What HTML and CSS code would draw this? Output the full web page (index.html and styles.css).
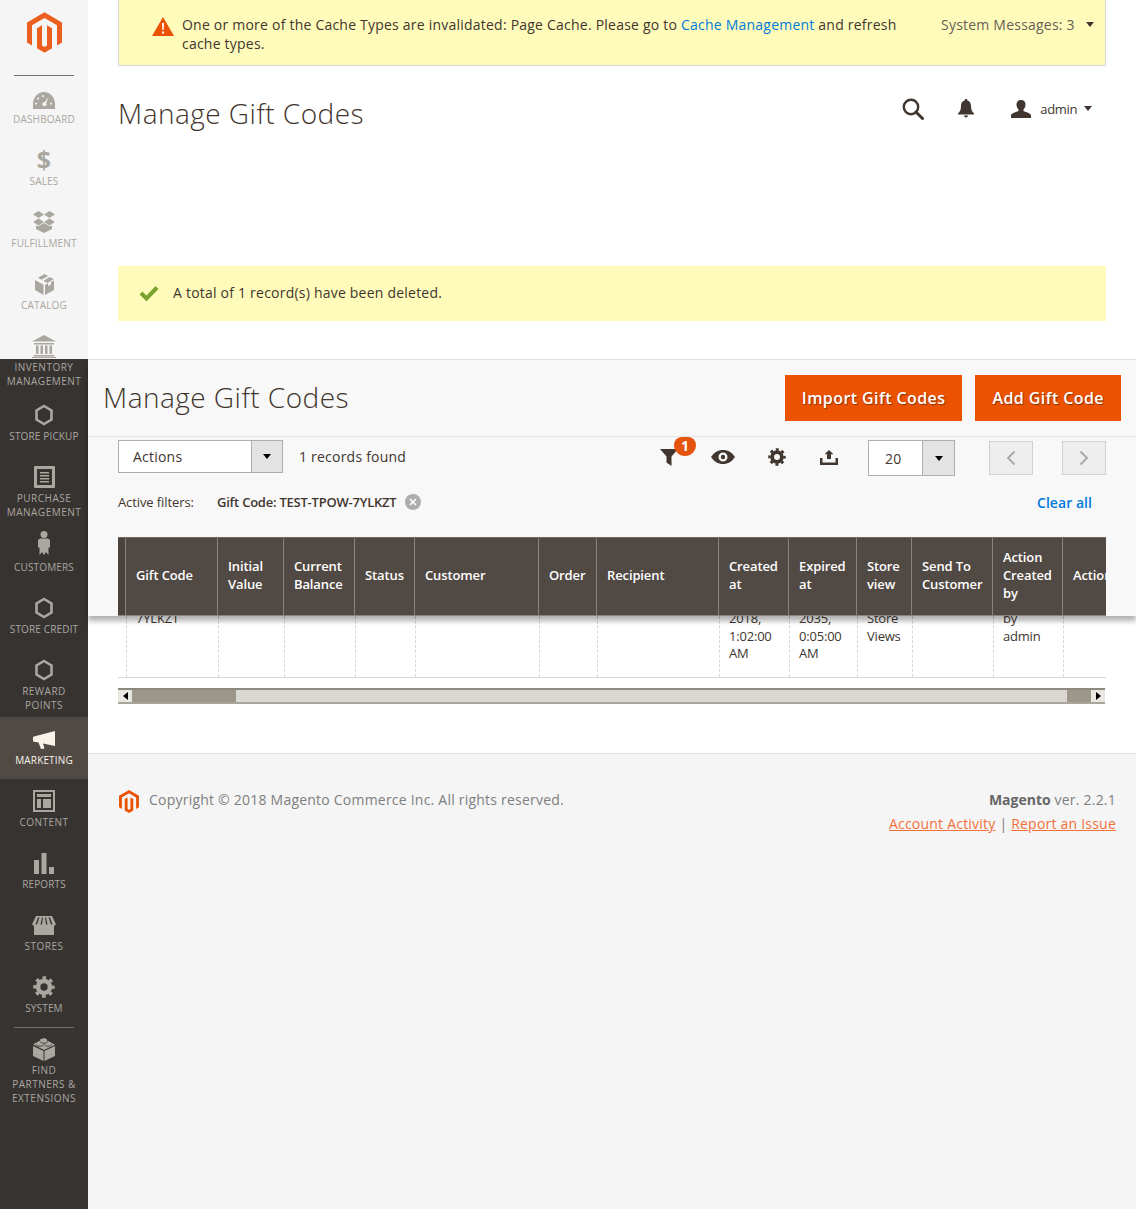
FILE: index.html
```html
<!DOCTYPE html>
<html lang="en">
<head>
  <meta charset="UTF-8">
  <title>Manage Gift Codes</title>
  <link rel="stylesheet" href="styles.css">
</head>
<body>
  <svg class="defs" width="0" height="0">
    <symbol id="logo" viewBox="1.6 0 20.8 24"><path d="M12 24l-4.455-2.572v-12l2.97-1.715v12.001l1.485.902 1.485-.902V7.713l2.971 1.715v12L12 24zM22.391 6v12l-2.969 1.714V7.713L12 3.43 4.574 7.713v12L1.609 18V6L12 0l10.391 6z"/></symbol>
    <symbol id="hex" viewBox="0 0 20 22"><path d="M10 2l7.5 4.4v9.2L10 20l-7.500-4.400V6.400z" fill="none" stroke="currentColor" stroke-width="2.600"/></symbol>
    <symbol id="gear" viewBox="0 0 24 24">
      <circle cx="12" cy="12" r="6.500" fill="none" stroke="currentColor" stroke-width="5"/>
      <circle cx="12" cy="12" r="10" fill="none" stroke="currentColor" stroke-width="3.400" stroke-dasharray="3.900 3.954" stroke-dashoffset="1.950"/>
    </symbol>
  </svg>

  <div class="page">
    <nav class="nav">
      <div class="nav-logo"><svg class="logo-big"><use href="#logo"/></svg></div>
      <a class="nav-item nav-item-first">
        <span class="nav-icon"><svg width="22" height="17" viewBox="0 0 22 17"><path fill-rule="evenodd" d="M0 17v-5C0 5 5 0 11 0s11 5 11 12v5zM15.500 5L11.600 10.200a2 2 0 1 0 1.500 1zM4 11.500a1 1 0 1 0 0 .1zM6 6.500a1 1 0 1 0 0 .1zM11 4a1 1 0 1 0 0 .1zM19 11.500a1 1 0 1 0 0 .1z"/></svg></span>
        <span class="nav-label">Dashboard</span>
      </a>
      <a class="nav-item">
        <span class="nav-icon nav-dollar">$</span>
        <span class="nav-label">Sales</span>
      </a>
      <a class="nav-item">
        <span class="nav-icon"><svg width="22" height="22" viewBox="0 0 22 22"><path d="M5.500 0L11 3.500 5.500 7 0 3.500zM16.500 0L22 3.500 16.500 7 11 3.500zM5.500 7.500L11 11 5.500 14.500 0 11zM16.500 7.500L22 11l-5.500 3.500L11 11zM5 15.500l6-3.500 6 3.500 2-1.200V18l-8 4-8-4v-3.700z"/></svg></span>
        <span class="nav-label">Fulfillment</span>
      </a>
      <a class="nav-item">
        <span class="nav-icon"><svg width="19" height="21" viewBox="0 0 19 21"><path d="M9.500 0L13 2 6.500 5.800 3 3.800zM14.800 3l4 2.200L12.300 9 8.400 6.800zM0 6l8.500 4.800V21L0 16zM19 6.500V16l-9 5V11l3-1.700v3l3-1.700V8.300z"/></svg></span>
        <span class="nav-label">Catalog</span>
      </a>
      <a class="nav-item nav-item-tall">
        <span class="nav-icon"><svg width="24" height="23" viewBox="0 0 24 23"><path d="M12 0l12 6.500H0zM2 8h20v1.500H2zM4 10.500h2.500V19H4zM8.500 10.500H11V19H8.500zM13 10.500h2.500V19H13zM17.500 10.500H20V19h-2.500zM2 20h20v1.300H2zM0 21.800h24V23H0z"/></svg></span>
        <span class="nav-label nav-label-wide">Inventory<br>Management</span>
      </a>
      <a class="nav-item">
        <span class="nav-icon"><svg width="20" height="22"><use href="#hex"/></svg></span>
        <span class="nav-label">Store Pickup</span>
      </a>
      <a class="nav-item nav-item-tall">
        <span class="nav-icon"><svg width="21" height="22" viewBox="0 0 21 22"><path fill-rule="evenodd" d="M1 0h19a1 1 0 0 1 1 1v20a1 1 0 0 1-1 1H1a1 1 0 0 1-1-1V1a1 1 0 0 1 1-1zM3 3v16h15V3zM6 6h9v1.500H6zM6 9h9v1.500H6zM6 12h9v1.500H6zM6 15h9v1.500H6z"/></svg></span>
        <span class="nav-label nav-label-wide">Purchase<br>Management</span>
      </a>
      <a class="nav-item nav-item-raised">
        <span class="nav-icon"><svg width="12" height="24" viewBox="0 0 12 24"><circle cx="6" cy="3.500" r="3.500"/><path d="M2 7.500h8l2 1.500v7.500h-1.500V24L8 21l-2 3-2-3-2.500 3v-7.500H0V9z"/></svg></span>
        <span class="nav-label">Customers</span>
      </a>
      <a class="nav-item">
        <span class="nav-icon"><svg width="20" height="22"><use href="#hex"/></svg></span>
        <span class="nav-label">Store Credit</span>
      </a>
      <a class="nav-item nav-item-tall">
        <span class="nav-icon"><svg width="20" height="22"><use href="#hex"/></svg></span>
        <span class="nav-label nav-label-wide">Reward<br>Points</span>
      </a>
      <a class="nav-item nav-item-active">
        <span class="nav-icon"><svg width="22" height="18" viewBox="0 0 22 18"><path d="M22 0v15L10 12.500l1.500 5-3.500.500-2.500-6.500L0 10.500V6l1-.500z"/></svg></span>
        <span class="nav-label">Marketing</span>
      </a>
      <a class="nav-item">
        <span class="nav-icon"><svg width="22" height="22" viewBox="0 0 22 22"><path fill-rule="evenodd" d="M0 0h22v22H0zM2 2v18h18V2zM4 4h14v3H4zM4 9h4v9H4zM10 9h8v9h-8z"/></svg></span>
        <span class="nav-label nav-label-wide">Content</span>
      </a>
      <a class="nav-item">
        <span class="nav-icon"><svg width="20" height="21" viewBox="0 0 20 21"><path d="M0 7h5v14H0zM7.500 0h5v21h-5zM15 14h5v7h-5z"/></svg></span>
        <span class="nav-label">Reports</span>
      </a>
      <a class="nav-item">
        <span class="nav-icon"><svg width="24" height="19" viewBox="0 0 24 19"><path d="M4 0h16l4 8.500-2 1.500v9H2v-9L0 8.500zM6 1.500L3.500 8.500h1.500L7.500 1.500zM10 1.500L8.500 8.500H10l1-7zM13 1.500l1 7h1.500L14 1.500zM16.500 1.500l2.500 7h1.500L18 1.500z" fill-rule="evenodd"/></svg></span>
        <span class="nav-label nav-label-wide">Stores</span>
      </a>
      <a class="nav-item">
        <span class="nav-icon"><svg width="22" height="22"><use href="#gear"/></svg></span>
        <span class="nav-label">System</span>
      </a>
      <div class="nav-divider"></div>
      <a class="nav-item nav-item-find">
        <span class="nav-icon"><svg width="22" height="23" viewBox="0 0 22 23"><path d="M0 8l10.500 5v10L0 18zM22 8v10l-10.500 5V13zM11 0l3 1.200v1.500c1.500.200 2.500.800 3 1.300l5 2.700-11 5.300L0 6.200l4.500-2.200c.7-.6 1.700-1 2.500-1.200V1.500z"/><path d="M7.500 3.500c0 1 1.500 1.700 3.500 1.700s3.500-.7 3.500-1.700M3.500 6.500c0 1 1.500 1.700 3.500 1.700s3.500-.7 3.500-1.700M11.500 6.500c0 1 1.500 1.700 3.500 1.700s3.500-.7 3.500-1.700" fill="none" stroke="#373330" stroke-width="0.800"/></svg></span>
        <span class="nav-label nav-label-wide">Find<br>Partners &amp;<br>Extensions</span>
      </a>
    </nav>

    <div class="main">
      <div class="content">
        <div class="notice">
          <svg class="notice-icon" width="22" height="19" viewBox="0 0 22 19"><path d="M11 0l11 19H0z" fill="#eb5202"/><path d="M10 6h2l-.3 7h-1.400zM10 14.500h2v2h-2z" fill="#fff"/></svg>
          <p class="notice-text">One or more of the Cache Types are invalidated: Page Cache. Please go to <a class="link">Cache Management</a> and refresh cache types.</p>
          <div class="notice-count">System Messages: 3<span class="caret caret-dark"></span></div>
        </div>

        <div class="page-head">
          <h1 class="title">Manage Gift Codes</h1>
          <div class="head-actions">
            <svg class="icon-search" width="22" height="22" viewBox="0 0 22 22"><circle cx="9" cy="9" r="7.200" fill="none" stroke="#41362f" stroke-width="2.400"/><path d="M14 14l6.500 6.500" stroke="#41362f" stroke-width="3" stroke-linecap="round"/></svg>
            <svg class="icon-bell" width="16" height="19" viewBox="0 0 16 19"><path d="M8 0c1 0 1.400.700 1.400 1.500C12 2.200 13 4.500 13 7c0 4 1 5.500 3 7.500v1H0v-1C2 12.500 3 11 3 7c0-2.500 1-4.800 3.600-5.500C6.600.700 7 0 8 0zM6 16.500h4a2 2 0 0 1-4 0z" fill="#41362f"/></svg>
            <svg class="icon-user" width="20" height="18" viewBox="0 0 20 18"><path d="M10 0c3 0 4.500 2 4.500 4.500 0 2-1 4-2 5v1.500c2 1 7.500 2 7.500 4.500V18H0v-2.500C0 13 5.500 12 7.500 11V9.500c-1-1-2-3-2-5C5.500 2 7 0 10 0z" fill="#41362f"/></svg>
            <span class="user-name">admin</span>
            <span class="caret caret-dark"></span>
          </div>
        </div>

        <div class="success">
          <svg width="20" height="16" viewBox="0 0 20 16"><path d="M2 8l5.500 5.500L18 2.500" fill="none" stroke="#79a22e" stroke-width="4"/></svg>
          <span>A total of 1 record(s) have been deleted.</span>
        </div>
      </div>

      <div class="band">
        <div class="band-head">
          <h1 class="title">Manage Gift Codes</h1>
          <div class="band-buttons">
            <button class="btn">Import Gift Codes</button>
            <button class="btn">Add Gift Code</button>
          </div>
        </div>

        <div class="toolbar">
          <div class="select select-actions">
            <span class="select-value">Actions</span>
            <span class="select-arrow"><span class="caret"></span></span>
          </div>
          <span class="records">1 records found</span>
          <div class="tools">
            <span class="tool tool-filter">
              <svg width="18" height="17" viewBox="0 0 18 17"><path d="M0 0h18l-6.500 7.500V17l-5-3.500v-6z" fill="#41362f"/></svg>
              <span class="badge">1</span>
            </span>
            <span class="tool"><svg width="24" height="14" viewBox="0 0 24 14"><path fill-rule="evenodd" d="M0 7c3-4.500 7-7 12-7s9 2.500 12 7c-3 4.500-7 7-12 7S3 11.500 0 7zm12-4.500a4.500 4.500 0 1 0 0 9 4.500 4.500 0 0 0 0-9zm0 2.300a2.200 2.200 0 1 1 0 4.400 2.200 2.200 0 0 1 0-4.400z" fill="#41362f"/></svg></span>
            <span class="tool tool-gear"><svg width="18" height="18"><use href="#gear"/></svg></span>
            <span class="tool tool-export"><svg width="18" height="15" viewBox="0 0 18 15"><path d="M9 0l4.500 4.200H11V9H7V4.200H4.500zM0 8h2.500v4.500h13V8H18v7H0z" fill="#41362f"/></svg></span>
          </div>
          <div class="select select-size">
            <span class="select-value">20</span>
            <span class="select-arrow"><span class="caret"></span></span>
          </div>
          <span class="pager pager-prev"><svg width="10" height="16" viewBox="0 0 10 16"><path d="M8.500 1.500L2 8l6.500 6.500" fill="none" stroke="#a8a8a8" stroke-width="1.800"/></svg></span>
          <span class="pager pager-next"><svg width="10" height="16" viewBox="0 0 10 16"><path d="M1.500 1.500L8 8l-6.500 6.500" fill="none" stroke="#a8a8a8" stroke-width="1.800"/></svg></span>
        </div>

        <div class="filters">
          <span class="filters-label">Active filters:</span>
          <span class="filter-value">Gift Code: TEST-TPOW-7YLKZT</span>
          <svg class="filter-remove" width="16" height="16" viewBox="0 0 16 16"><circle cx="8" cy="8" r="8" fill="#adadad"/><path d="M5 5l6 6M11 5l-6 6" stroke="#fff" stroke-width="1.600"/></svg>
          <a class="clear-all">Clear all</a>
        </div>

        <div class="grid-row grid-head">
          <div class="head-cell head-check"></div>
          <div class="head-cell">Gift Code</div>
          <div class="head-cell">Initial Value</div>
          <div class="head-cell">Current Balance</div>
          <div class="head-cell">Status</div>
          <div class="head-cell">Customer</div>
          <div class="head-cell">Order</div>
          <div class="head-cell">Recipient</div>
          <div class="head-cell">Created at</div>
          <div class="head-cell">Expired at</div>
          <div class="head-cell">Store view</div>
          <div class="head-cell">Send To Customer</div>
          <div class="head-cell">Action Created by</div>
          <div class="head-cell head-last">Action</div>
        </div>
      </div>

      <div class="grid-wrap">
        <div class="grid-row grid-body">
          <div class="cell cell-check"></div>
          <div class="cell"><div class="cell-text">7YLKZT</div></div>
          <div class="cell"></div>
          <div class="cell"></div>
          <div class="cell"></div>
          <div class="cell"></div>
          <div class="cell"></div>
          <div class="cell"></div>
          <div class="cell"><div class="cell-text">2018,<br>1:02:00<br>AM</div></div>
          <div class="cell"><div class="cell-text">2035,<br>0:05:00<br>AM</div></div>
          <div class="cell"><div class="cell-text">Store<br>Views</div></div>
          <div class="cell"></div>
          <div class="cell"><div class="cell-text">by<br>admin</div></div>
          <div class="cell"></div>
        </div>
        <div class="hscroll">
          <span class="hscroll-btn"><span class="arrow-left"></span></span>
          <span class="hscroll-thumb hscroll-thumb-left"></span>
          <span class="hscroll-track"></span>
          <span class="hscroll-thumb hscroll-thumb-right"></span>
          <span class="hscroll-btn"><span class="arrow-right"></span></span>
        </div>
      </div>

      <footer class="footer">
        <div class="footer-left">
          <svg class="footer-logo"><use href="#logo"/></svg>
          <span>Copyright © 2018 Magento Commerce Inc. All rights reserved.</span>
        </div>
        <div class="footer-right">
          <div><strong class="footer-brand">Magento</strong> ver. 2.2.1</div>
          <div class="footer-links"><a class="footer-link">Account Activity</a> | <a class="footer-link">Report an Issue</a></div>
        </div>
      </footer>
    </div>
  </div>
</body>
</html>
```

FILE: styles.css
```css
* {
  box-sizing: border-box;
}
body {
  margin: 0;
  font-family: "Open Sans", Arial, sans-serif;
  font-size: 14px;
  letter-spacing: 0.22px;
  color: #41362f;
  background: #fff;
}
.defs {
  display: block;
  height: 0;
}
.page {
  display: flex;
  min-height: 1209px;
}

/* sidebar */
.nav {
  width: 88px;
  flex: none;
  background: linear-gradient(#f5f5f5 359px, #373330 359px);
  color: #aaa6a0;
}
.nav-logo {
  height: 76px;
  padding-top: 12px;
  margin: 0 14px;
  border-bottom: 1px solid #736e69;
  text-align: center;
}
.logo-big {
  width: 35px;
  height: 41px;
  fill: #eb5e20;
}
.nav-item {
  display: block;
  height: 62px;
  padding-top: 10px;
  text-align: center;
}
.nav-item-first {
  height: 60px;
  margin-top: 2px;
}
.nav-item-first .nav-label {
  margin-top: 0;
}
.nav-item-tall {
  height: 69px;
}
.nav-item-raised .nav-icon {
  transform: translateY(-3px);
}
.nav-item-active {
  padding-top: 11px;
  background: #514943;
  color: #f7f3eb;
}
.nav-item-active .nav-label {
  margin-top: 1px;
}
.nav-item-find {
  height: 90px;
  padding-top: 9px;
}
.nav-icon {
  display: flex;
  align-items: center;
  justify-content: center;
  height: 24px;
}
.nav-icon svg {
  fill: currentColor;
}
.nav-dollar {
  padding-bottom: 2px;
  font-size: 25px;
  font-weight: 700;
  line-height: 22px;
}
.nav-label {
  display: block;
  margin-top: 2px;
  font-size: 10px;
  line-height: 14px;
  letter-spacing: 0.15px;
  text-transform: uppercase;
}
.nav-label-wide {
  letter-spacing: 0.5px;
}
.nav-divider {
  height: 1px;
  margin: 0 14px;
  background: #736e69;
}

/* main area */
.main {
  flex: 1;
  min-width: 0;
  display: flex;
  flex-direction: column;
}
.content {
  height: 359px;
  padding: 0 30px;
}
.notice {
  display: flex;
  align-items: flex-start;
  height: 66px;
  padding: 15px 16px 0 33px;
  background: #fffbbb;
  border: 1px solid #d6d6d6;
  border-top: 0;
  line-height: 19px;
}
.notice-icon {
  flex: none;
  margin: 2px 8px 0 0;
}
.notice-text {
  width: 735px;
  margin: 0;
  flex: none;
}
.notice-count {
  margin-left: 24px;
  color: #676056;
  white-space: nowrap;
}
.notice-count .caret {
  margin-left: 11px;
  vertical-align: 3px;
}
.link {
  color: #007bdb;
}
.caret {
  display: inline-block;
  width: 0;
  height: 0;
  border: 4.5px solid transparent;
  border-top: 5px solid #000;
  border-bottom: 0;
}
.caret-dark {
  border-top-color: #41362f;
}
.page-head {
  display: flex;
  align-items: center;
  justify-content: space-between;
  height: 96px;
  padding-top: 0;
}
.title {
  margin: 0 0 2px;
  font-size: 28px;
  font-weight: 300;
  line-height: 36px;
  letter-spacing: 0.47px;
  color: #41362f;
}
.head-actions {
  display: flex;
  align-items: center;
  margin: -11px 14px 0 0;
}
.icon-bell {
  margin-left: 34px;
}
.icon-user {
  margin-left: 37px;
}
.user-name {
  margin: 0 7px 0 9px;
  font-size: 13px;
  letter-spacing: -0.35px;
}
.success {
  display: flex;
  align-items: center;
  gap: 14px;
  height: 55px;
  margin-top: 104px;
  padding: 0 0 2px 21px;
  background: #fffbbb;
}

/* sticky band */
.band {
  position: relative;
  z-index: 1;
  background: #f8f8f8;
  border-top: 1px solid #e3e3e3;
  box-shadow: 0 5px 5px rgba(0, 0, 0, 0.3);
}
.band-head {
  display: flex;
  align-items: center;
  justify-content: space-between;
  height: 77px;
  padding: 0 15px;
  border-bottom: 1px solid #e3e3e3;
}
.band-buttons {
  display: flex;
  gap: 13px;
}
.btn {
  height: 46px;
  padding: 0 17px;
  border: 0;
  background: #eb5202;
  color: #fff;
  font-family: inherit;
  font-size: 16px;
  font-weight: 600;
  text-shadow: 1px 1px 1px rgba(90, 40, 0, 0.7);
  letter-spacing: 0.42px;
}
.toolbar {
  display: flex;
  align-items: flex-start;
  height: 53px;
  padding: 3px 30px 0;
}
.select {
  display: flex;
  background: #fff;
  border: 1px solid #adadad;
}
.select-actions {
  width: 165px;
  height: 33px;
}
.select-size {
  width: 87px;
  height: 36px;
}
.select-value {
  flex: 1;
  padding-left: 14px;
  line-height: 31px;
}
.select-size .select-value {
  padding-left: 16px;
  line-height: 35px;
}
.select-arrow {
  display: flex;
  align-items: center;
  justify-content: center;
  width: 31px;
  background: #e3e3e3;
  border-left: 1px solid #adadad;
}
.select-size .select-arrow {
  width: 32px;
}
.records {
  margin-left: 16px;
  line-height: 33px;
}
.tools {
  display: flex;
  margin-left: auto;
  margin-right: 14px;
}
.tool {
  display: flex;
  align-items: center;
  justify-content: center;
  position: relative;
  width: 53px;
  height: 34px;
}
.tool-filter {
  width: 54px;
}
.tool-gear {
  width: 54px;
  padding-left: 1px;
  color: #41362f;
  fill: #41362f;
}
.tool-export {
  width: 51px;
}
.badge {
  position: absolute;
  left: 32px;
  top: -3px;
  width: 22px;
  height: 19px;
  border-radius: 8px 8px 11px 11px;
  background: #e5540f;
  color: #fff;
  font-size: 14px;
  font-weight: 700;
  line-height: 18px;
  text-align: center;
}
.pager {
  display: flex;
  align-items: center;
  justify-content: center;
  width: 44px;
  height: 34px;
  margin-top: 1px;
  background: #eee;
  border: 1px solid #d1d1d1;
}
.pager-prev {
  margin-left: 34px;
}
.pager-next {
  margin-left: 29px;
}
.filters {
  display: flex;
  align-items: center;
  height: 24px;
  padding: 0 44px 0 30px;
  font-size: 13px;
  letter-spacing: 0;
}
.filters-label {
  width: 99px;
  letter-spacing: -0.1px;
}
.filter-value {
  font-weight: 600;
  letter-spacing: -0.23px;
}
.filter-remove {
  margin-left: 9px;
}
.clear-all {
  margin-left: auto;
  color: #007bdb;
  font-size: 14px;
  font-weight: 600;
  letter-spacing: 0.05px;
}

/* grid */
.grid-row {
  display: grid;
  grid-template-columns: 8px 92px 66px 71px 60px 124px 58px 122px 70px 68px 55px 81px 70px 43px;
}
.grid-head {
  margin: 23px 30px 0;
  height: 79px;
  background: #514943;
  border-top: 1px solid #6f6963;
  border-bottom: 1px solid #8a837f;
}
.head-cell {
  display: flex;
  align-items: center;
  overflow: hidden;
  padding: 0 10px 4px;
  border-right: 1px solid #8a837f;
  color: #fff;
  font-size: 13px;
  font-weight: 600;
  line-height: 18px;
  letter-spacing: -0.12px;
}
.head-check {
  padding: 0;
  background: #4a423c;
}
.head-last {
  border-right: 0;
  padding-right: 0;
  white-space: nowrap;
}
.grid-wrap {
  height: 137px;
  padding: 0 30px;
}
.grid-body {
  height: 62px;
  overflow: hidden;
  border-bottom: 1px solid #d6d6d6;
  font-size: 13px;
  line-height: 17.5px;
  letter-spacing: -0.2px;
}
.cell {
  padding: 0 9px;
  border-left: 1px dashed #d6d6d6;
}
.cell-check {
  padding: 0;
  border-left: 0;
}
.cell-text {
  margin-top: -6px;
}
.hscroll {
  display: flex;
  height: 16px;
  margin: 10px 1px 0 0;
  background: #dad8d3;
  border-top: 2px solid #8e897f;
  border-bottom: 2px solid #a9a59b;
}
.hscroll-btn {
  display: flex;
  align-items: center;
  justify-content: center;
  width: 14px;
  background: #e9e7e2;
}
.arrow-left,
.arrow-right {
  width: 0;
  height: 0;
  border: 4px solid transparent;
}
.arrow-left {
  border-left: 0;
  border-right: 5px solid #000;
}
.arrow-right {
  border-right: 0;
  border-left: 5px solid #000;
}
.hscroll-thumb {
  background: #9c9789;
}
.hscroll-thumb-left {
  width: 104px;
}
.hscroll-thumb-right {
  width: 24px;
}
.hscroll-track {
  flex: 1;
  background: #dad8d3;
}

/* footer */
.footer {
  flex: 1;
  display: flex;
  justify-content: space-between;
  padding: 34px 20px 0 31px;
  background: #f5f5f5;
  border-top: 1px solid #e3e3e3;
  color: #7e7e7e;
  line-height: 24px;
}
.footer-left {
  display: flex;
  align-items: flex-start;
  gap: 10px;
}
.footer-logo {
  width: 20px;
  height: 23px;
  margin-top: 2px;
  fill: #eb5202;
}
.footer-right {
  text-align: right;
}
.footer-brand {
  color: #666;
  letter-spacing: 0;
}
.footer-links {
  margin-top: 0;
}
.footer-link {
  color: #f2703c;
  text-decoration: underline;
}
```
